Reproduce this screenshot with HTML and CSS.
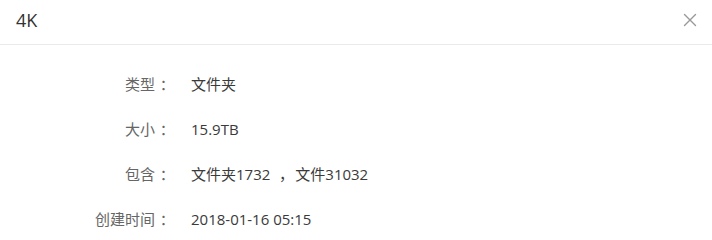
FILE: index.html
```html
<!DOCTYPE html>
<html lang="zh-CN">
<head>
<meta charset="utf-8">
<title>4K</title>
<link rel="stylesheet" href="styles.css">
</head>
<body>
<div class="dialog">
  <div class="header">
    <span class="title">4K</span>
    <span class="close" aria-label="关闭">
      <svg width="14" height="14" viewBox="0 0 14 14"><path d="M1.5 1.5 L12.5 12.5 M12.5 1.5 L1.5 12.5" stroke="#999" stroke-width="1.4" fill="none" stroke-linecap="round"/></svg>
    </span>
  </div>
  <div class="body">
    <div class="label">类型<span class="colon">：</span></div><div class="value">文件夹</div>
    <div class="label">大小<span class="colon">：</span></div><div class="value">15.9TB</div>
    <div class="label">包含<span class="colon">：</span></div><div class="value">文件夹1732<span class="comma">，</span>文件31032</div>
    <div class="label">创建时间<span class="colon">：</span></div><div class="value">2018-01-16 05:15</div>
  </div>
</div>
</body>
</html>
```
FILE: styles.css
```css
html, body {
  margin: 0;
  padding: 0;
  background: #fff;
}
body {
  font-family: "Open Sans", "Noto Sans CJK SC", sans-serif;
  color: #333;
}
.dialog {
  width: 712px;
}
.header {
  box-sizing: border-box;
  height: 45px;
  padding: 0 15px 4px 16px;
  display: flex;
  align-items: center;
  justify-content: space-between;
  border-bottom: 1px solid #ebebeb;
}
.title {
  font-size: 18px;
  line-height: 20px;
  color: #333;
}
.close {
  display: flex;
  width: 14px;
  height: 14px;
}
.body {
  display: grid;
  grid-template-columns: 172px 1fr;
  column-gap: 19px;
  padding-top: 17px;
  font-size: 15px;
  line-height: 45px;
}
.label {
  text-align: right;
  color: #666;
}
.value {
  color: #3a3a3a;
}
.colon,
.comma {
  display: inline-block;
  text-align: center;
  font-feature-settings: "halt" 1;
}
.colon {
  width: 17px;
}
.comma {
  width: 25px;
}
```
